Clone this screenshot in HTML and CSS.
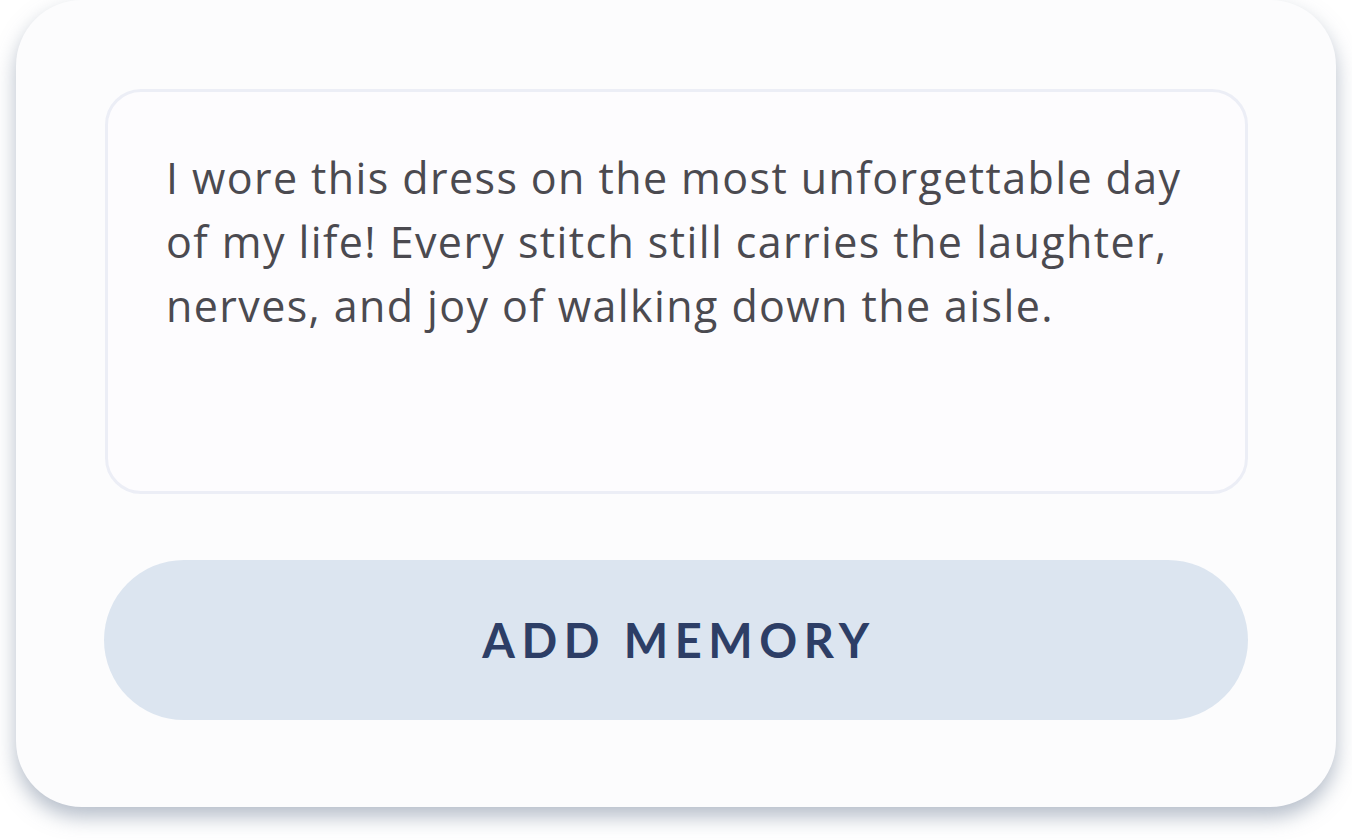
FILE: index.html
```html
<!DOCTYPE html>
<html>
<head>
<meta charset="utf-8">
<link rel="stylesheet" href="styles.css">
</head>
<body>
<div class="page">
  <div class="card">
    <div class="memory-box">
      <p class="memory-text">I wore this dress on the most unforgettable day of my life! Every stitch still carries the laughter, nerves, and joy of walking down the aisle.</p>
    </div>
    <button class="add-btn">ADD MEMORY</button>
  </div>
</div>
</body>
</html>
```

FILE: styles.css
```css
* { box-sizing: border-box; }
html, body { margin: 0; padding: 0; background: #ffffff; }
.page {
  width: 1352px;
  height: 840px;
  padding: 0 16px;
  overflow: hidden;
}
.card {
  width: 1320px;
  height: 807px;
  background: #fcfcfd;
  border-radius: 66px;
  box-shadow: 0 10px 20px rgba(110, 125, 150, 0.5);
  padding: 89px 88px 87px 89px;
  display: flex;
  flex-direction: column;
  gap: 66px;
}
.memory-box {
  height: 405px;
  border: 3px solid #eceef6;
  border-radius: 36px;
  background: #fdfcfe;
  padding: 54px 40px 0 58px;
}
.memory-text {
  margin: 0;
  max-width: 1040px;
  font-family: "Open Sans", "Noto Sans", sans-serif;
  font-size: 43px;
  line-height: 64px;
  letter-spacing: 1.4px;
  color: #4b4a50;
}
.add-btn {
  width: 1144px;
  margin-left: -1px;
  height: 160px;
  border: none;
  border-radius: 80px;
  background: #dce5f0;
  color: #2d3e66;
  font-family: "Lato", "Noto Sans", sans-serif;
  font-weight: 700;
  font-size: 47px;
  letter-spacing: 6.5px;
  padding: 0 0 0 6px;
  cursor: pointer;
}
```
